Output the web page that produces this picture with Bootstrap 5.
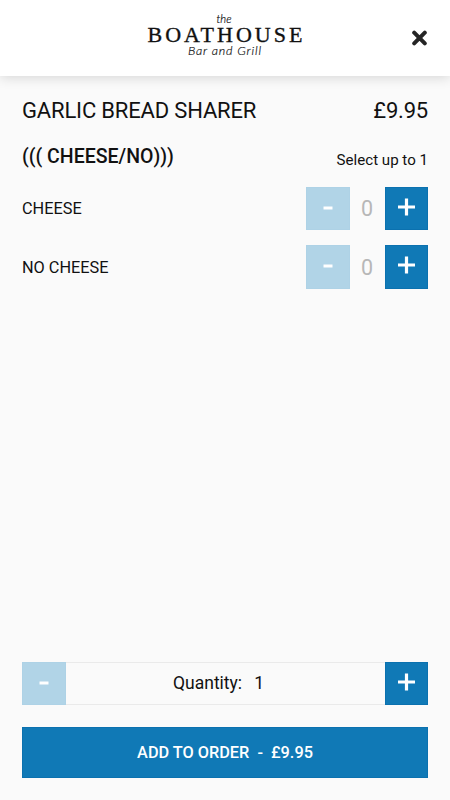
<!DOCTYPE html>
<html lang="en">
<head>
<meta charset="utf-8">
<meta name="viewport" content="width=device-width, initial-scale=1">
<title>The Boathouse Bar and Grill</title>
<link href="https://cdn.jsdelivr.net/npm/bootstrap@5.3.0/dist/css/bootstrap.min.css" rel="stylesheet">
<style>
body{font-family:Roboto,"Liberation Sans",sans-serif;background:#fafafa;color:#111;height:800px;overflow:hidden}
.topbar{height:76px;background:#fff;box-shadow:0 1px 12px rgba(0,0,0,.16);display:grid;grid-template-columns:1fr 170px 1fr}
.close-btn{padding:0 22px 0 0;border:0;background:none}
.inner{padding:0 22px}
.item-title{font-size:22px;line-height:26px;margin:22px 0 0}
.t1{letter-spacing:-.17px}
.price{letter-spacing:-.2px}
.group{margin-top:20.5px}
.group-title{font-size:19.5px;line-height:24px;font-weight:500}
.hint{font-size:15.1px;line-height:20px;margin-bottom:-1px}
.options{padding-top:18px;gap:15px}
.opt{font-size:16.3px;height:43.5px}
.opt span{padding-top:2px}
.step{width:43.5px;height:43.5px;border-radius:0;padding:0;background:#1079b6;color:#fff;border:1px solid #0b71af}
.step:disabled{background:#b1d4e7;border-color:#aed2e6;opacity:1}
.count{width:35px;font-size:21.5px;color:#b7b7b7}
.qty{height:43.5px;font-size:17.5px;box-shadow:inset 0 1px #eaeaea,inset 0 -1px #eaeaea}
.qty-label{padding-right:13px}
.add{height:51.5px;margin:21.5px 0 22px;border-radius:0;background:#1079b6;border:1px solid #0b71af;color:#fff;font-size:16.3px;font-weight:500;padding:2px 0 0;white-space:pre}
</style>
</head>
<body class="d-flex flex-column">
<header class="topbar flex-shrink-0">
  <span></span>
  <svg width="170" height="76" role="img" aria-label="The Boathouse Bar and Grill" fill="#111">
    <text x="76.5" y="22.5" font-family="Lato,sans-serif" font-weight="300" font-style="italic" font-size="11.5" stroke="#111" stroke-width=".2" textLength="15" lengthAdjust="spacingAndGlyphs">the</text>
    <text x="7.5" y="41.5" font-family="Liberation Serif,serif" font-size="22" stroke="#111" stroke-width=".35" textLength="155">BOATHOUSE</text>
    <text x="48" y="54.5" font-family="Lato,sans-serif" font-weight="300" font-style="italic" font-size="12.5" stroke="#111" stroke-width=".2" textLength="73">Bar and Grill</text>
  </svg>
  <div class="d-flex align-items-center justify-content-end">
    <button class="close-btn d-flex" aria-label="Close"><svg width="17" height="16"><path d="M3.2 2.7 13.8 13.3M13.8 2.7 3.2 13.3" stroke="#252525" stroke-width="4" stroke-linecap="round"/></svg></button>
  </div>
</header>
<main class="inner d-flex flex-column flex-grow-1">
  <div class="item-title d-flex justify-content-between"><span class="t1">GARLIC BREAD SHARER</span><span class="price">£9.95</span></div>
  <div class="group d-flex justify-content-between align-items-end">
    <div class="group-title">((( CHEESE/NO)))</div><div class="hint">Select up to 1</div>
  </div>
  <div class="options d-flex flex-column">
    <div class="opt d-flex align-items-center"><span class="me-auto">CHEESE</span>
      <button class="btn step" disabled aria-label="Less"><svg class="d-block mx-auto" width="42" height="42"><path d="M16.5 20h9" stroke="#fff" stroke-width="3"/></svg></button>
      <span class="count text-center">0</span>
      <button class="btn step" aria-label="More"><svg class="d-block mx-auto" width="42" height="42"><path d="M12 19h17M20.5 10.5v17" stroke="#fff" stroke-width="3.2"/></svg></button></div>
    <div class="opt d-flex align-items-center"><span class="me-auto">NO CHEESE</span>
      <button class="btn step" disabled aria-label="Less"><svg class="d-block mx-auto" width="42" height="42"><path d="M16.5 20h9" stroke="#fff" stroke-width="3"/></svg></button>
      <span class="count text-center">0</span>
      <button class="btn step" aria-label="More"><svg class="d-block mx-auto" width="42" height="42"><path d="M12 19h17M20.5 10.5v17" stroke="#fff" stroke-width="3.2"/></svg></button></div>
  </div>
  <div class="qty d-flex align-items-center mt-auto">
    <button class="btn step" disabled aria-label="Less"><svg class="d-block mx-auto" width="42" height="42"><path d="M16.5 20h9" stroke="#fff" stroke-width="3"/></svg></button>
    <div class="qty-label flex-grow-1 d-flex justify-content-center"><span>Quantity:</span><span class="ms-2 ps-1">1</span></div>
    <button class="btn step" aria-label="More"><svg class="d-block mx-auto" width="42" height="42"><path d="M12 19h17M20.5 10.5v17" stroke="#fff" stroke-width="3.2"/></svg></button>
  </div>
  <button class="btn add">ADD TO ORDER  -  £9.95</button>
</main>
<script src="https://cdn.jsdelivr.net/npm/bootstrap@5.3.0/dist/js/bootstrap.bundle.min.js"></script>
</body>
</html>
